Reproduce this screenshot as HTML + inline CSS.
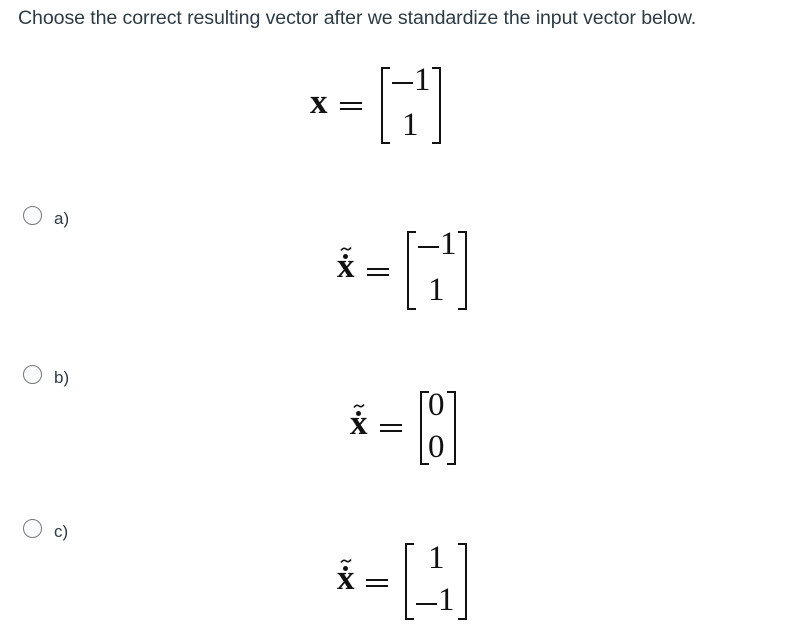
<!DOCTYPE html>
<html><head><meta charset="utf-8"><style>
body{margin:0;width:805px;height:634px;background:#fff;position:relative;overflow:hidden;font-family:"Liberation Sans",sans-serif;color:#2d3b45}
.a{position:absolute}
.t{left:18px;top:7px;font-size:19.6px;color:#2d3b45;white-space:nowrap;letter-spacing:-0.1px}
.r{width:17px;height:17px;border:1.3px solid #777;border-radius:50%;background:#fafbfd}
.l{font-size:17px}
.g{position:absolute}
.d{position:absolute;font-family:"Liberation Serif",serif;color:#111;font-size:33px;line-height:33px}
.x{position:absolute;font-family:"Liberation Serif",serif;font-weight:bold;color:#111;font-size:35px;line-height:34px}
.bar{position:absolute;background:#111;height:2px}
.lb{position:absolute;border:2.5px solid #111;border-right:none;width:7px}
.rb{position:absolute;border:2.5px solid #111;border-left:none;width:7px}
</style></head><body>
<div class="a t">Choose the correct resulting vector after we standardize the input vector below.</div>

<!-- main -->
<div class="g" style="left:0;top:0">
<div class="x" style="left:310px;top:85px">x</div>
<div class="bar" style="left:340px;top:102px;width:22px"></div>
<div class="bar" style="left:340px;top:108px;width:22px"></div>
<div class="lb" style="left:381px;top:67px;height:73px"></div>
<div class="rb" style="left:432px;top:67px;height:73px"></div>
<div class="bar" style="left:392px;top:82px;width:21px"></div>
<div class="d" style="left:414px;top:64px">1</div>
<div class="d" style="left:402px;top:109px">1</div>
</div>

<!-- a -->
<div class="a r" style="left:23px;top:206px"></div>
<div class="a l" style="left:54px;top:209px">a)</div>
<div class="g" style="left:26px;top:164px">
<div class="x" style="left:311px;top:85px">x</div>
<svg class="g" style="left:314px;top:82px" width="12" height="6" viewBox="0 0 12 6"><path d="M1 4.5 Q3.5 1 6 3 T11 1.5" stroke="#111" stroke-width="1.6" fill="none"/></svg>
<div class="g" style="left:317px;top:90px;width:5px;height:5px;border-radius:50%;background:#111"></div>
<div class="bar" style="left:341px;top:104px;width:22px"></div>
<div class="bar" style="left:341px;top:110px;width:22px"></div>
<div class="lb" style="left:381px;top:67px;height:75px"></div>
<div class="rb" style="left:432px;top:67px;height:75px"></div>
<div class="bar" style="left:392px;top:82px;width:21px"></div>
<div class="d" style="left:414px;top:64px">1</div>
<div class="d" style="left:402px;top:110px">1</div>
</div>

<!-- b -->
<div class="a r" style="left:23px;top:365px"></div>
<div class="a l" style="left:54px;top:368px">b)</div>
<div class="g" style="left:0;top:0">
<div class="x" style="left:350px;top:406px">x</div>
<svg class="g" style="left:353px;top:403px" width="12" height="6" viewBox="0 0 12 6"><path d="M1 4.5 Q3.5 1 6 3 T11 1.5" stroke="#111" stroke-width="1.6" fill="none"/></svg>
<div class="g" style="left:356px;top:411px;width:5px;height:5px;border-radius:50%;background:#111"></div>
<div class="bar" style="left:380px;top:424px;width:22px"></div>
<div class="bar" style="left:380px;top:430px;width:22px"></div>
<div class="lb" style="left:420px;top:391px;height:70px"></div>
<div class="rb" style="left:447px;top:391px;height:70px"></div>
<div class="d" style="left:428px;top:389px">0</div>
<div class="d" style="left:428px;top:431px">0</div>
</div>

<!-- c -->
<div class="a r" style="left:23px;top:519px"></div>
<div class="a l" style="left:54px;top:522px">c)</div>
<div class="g" style="left:24px;top:476px">
<div class="x" style="left:313px;top:85px">x</div>
<svg class="g" style="left:316px;top:82px" width="12" height="6" viewBox="0 0 12 6"><path d="M1 4.5 Q3.5 1 6 3 T11 1.5" stroke="#111" stroke-width="1.6" fill="none"/></svg>
<div class="g" style="left:319px;top:90px;width:5px;height:5px;border-radius:50%;background:#111"></div>
<div class="bar" style="left:342px;top:103px;width:22px"></div>
<div class="bar" style="left:342px;top:109px;width:22px"></div>
<div class="lb" style="left:381px;top:67px;height:73px"></div>
<div class="rb" style="left:434px;top:67px;height:73px"></div>
<div class="d" style="left:404px;top:66px">1</div>
<div class="bar" style="left:392px;top:127px;width:21px"></div>
<div class="d" style="left:414px;top:108px">1</div>
</div>
</body></html>
